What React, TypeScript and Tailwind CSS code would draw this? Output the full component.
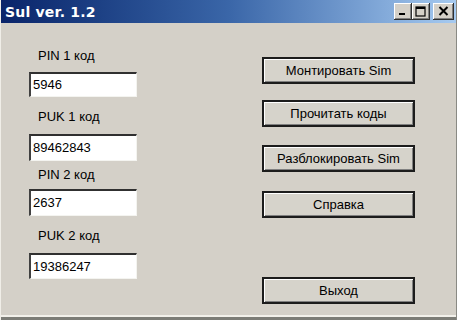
import React from "react";

const ui = { fontFamily: '"Liberation Sans", Arial, sans-serif' };

function Field({ label, value, labelTop, boxTop, boxH }: { label: string; value: string; labelTop: number; boxTop: number; boxH: number }) {
    return (
        <>
            <div className="pl-[9px] h-4 leading-4 text-[13px] text-black" style={{ marginTop: labelTop }}>
                {label}
            </div>
            <div
                className="w-[108px] bg-white border-t-2 border-l-2 border-t-[#303030] border-l-[#404040] border-b border-r border-b-[#f4f4f0] border-r-[#f4f4f0] flex items-center pl-[2px] text-[13px] text-black"
                style={{ marginTop: boxTop, height: boxH }}
            >
                {value}
            </div>
        </>
    );
}

function Btn({ children, top }: { children: React.ReactNode; top: number }) {
    return (
        <div
            className="w-[153px] h-[27px] border-2 border-[#1c1c1c] bg-[#d6d3cb] shadow-[inset_1px_1px_0_#ffffff,inset_-1px_-1px_0_#808080] flex items-center justify-center text-[13px] text-black"
            style={{ marginTop: top }}
        >
            {children}
        </div>
    );
}

function CapBtn({ children, w }: { children: React.ReactNode; w: string }) {
    return (
        <div className={`${w} h-[17px] bg-[#d4d0c8] border-r border-b border-[#303030] shadow-[inset_1px_1px_0_#ffffff,inset_-1px_-1px_0_#808080] flex items-center justify-center`}>
            {children}
        </div>
    );
}

export default function App() {
    return (
        <div className="w-[457px] h-[320px] bg-[#d4d0c8] overflow-hidden flex flex-col border-l border-l-[#f0eee8] border-r border-r-[#8a8a84]" style={ui}>
            {/* title bar */}
            <div className="h-[23px] shrink-0 bg-gradient-to-r from-[#0a246a] via-[#3a66a8] to-[#a6caf0] flex items-center pl-[4px] pr-[2px]">
                <span className="text-white font-bold text-[14px] leading-none tracking-[0.2px]" style={{ fontFamily: '"DejaVu Sans", Verdana, sans-serif' }}>
                    Sul ver. 1.2
                </span>
                <div className="ml-auto flex items-center">
                    <CapBtn w="w-[18px]">
                        <svg width="10" height="10" viewBox="0 0 10 10"><rect x="1" y="7" width="6" height="2" fill="#000" /></svg>
                    </CapBtn>
                    <CapBtn w="w-[18px]">
                        <svg width="11" height="11" viewBox="0 0 11 11"><rect x="1" y="1" width="9" height="9" fill="none" stroke="#000" strokeWidth="1.2" /><rect x="1" y="1" width="9" height="2" fill="#000" /></svg>
                    </CapBtn>
                    <div className="w-[3px]" />
                    <CapBtn w="w-[21px]">
                        <svg width="11" height="10" viewBox="0 0 11 10"><path d="M1.5 1 L9.5 9 M9.5 1 L1.5 9" stroke="#000" strokeWidth="2" /></svg>
                    </CapBtn>
                </div>
            </div>

            {/* body */}
            <div className="flex-1 flex">
                <div className="w-[233px] pl-[28px] flex flex-col">
                    <Field label="PIN 1 код" value="5946" labelTop={25} boxTop={8} boxH={25} />
                    <Field label="PUK 1 код" value="89462843" labelTop={12} boxTop={9} boxH={27} />
                    <Field label="PIN 2 код" value="2637" labelTop={6} boxTop={6} boxH={27} />
                    <Field label="PUK 2 код" value="19386247" labelTop={12} boxTop={9} boxH={26} />
                </div>
                <div className="flex flex-col pl-[28px]">
                    <Btn top={34}>Монтировать Sim</Btn>
                    <Btn top={16}>Прочитать коды</Btn>
                    <Btn top={18}>Разблокировать Sim</Btn>
                    <Btn top={19}>Справка</Btn>
                    <Btn top={59}>Выход</Btn>
                </div>
            </div>

            {/* bottom frame edge */}
            <div className="h-[2px] shrink-0 bg-[#f2f0ea]" />
            <div className="h-[3px] shrink-0 bg-[#7c7c76]" />
        </div>
    );
}
